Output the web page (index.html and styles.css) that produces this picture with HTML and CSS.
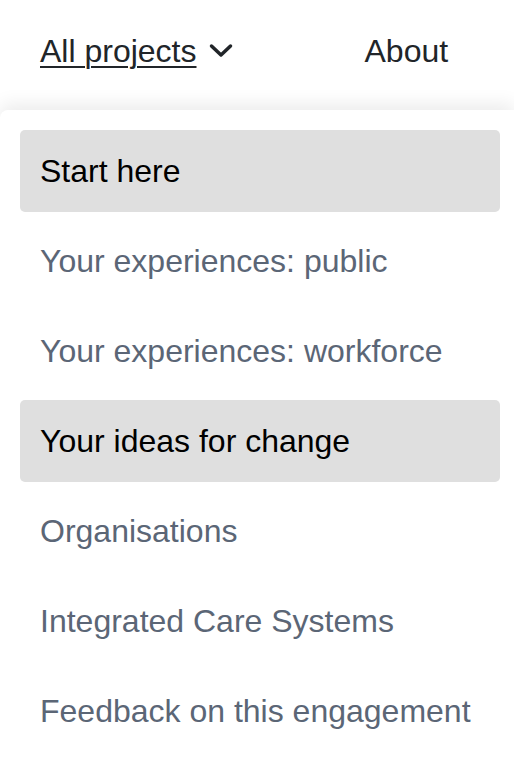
FILE: index.html
```html
<!DOCTYPE html>
<html lang="en">
<head>
<meta charset="utf-8">
<title>All projects</title>
<link rel="stylesheet" href="styles.css">
</head>
<body>
<header class="topbar">
  <a class="nav-link nav-link--current" href="#">All projects</a>
  <svg class="chevron" width="28" height="28" viewBox="0 0 28 28" aria-hidden="true">
    <path d="M4.5 9 L14 18 L23.5 9" fill="none" stroke="#212529" stroke-width="3.5" stroke-linecap="round" stroke-linejoin="round"/>
  </svg>
  <a class="nav-link nav-link--about" href="#">About</a>
</header>
<nav class="menu">
  <a class="menu-item menu-item--active" href="#">Start here</a>
  <a class="menu-item" href="#">Your experiences: public</a>
  <a class="menu-item" href="#">Your experiences: workforce</a>
  <a class="menu-item menu-item--active" href="#">Your ideas for change</a>
  <a class="menu-item" href="#">Organisations</a>
  <a class="menu-item" href="#">Integrated Care Systems</a>
  <a class="menu-item" href="#">Feedback on this engagement</a>
</nav>
</body>
</html>
```
FILE: styles.css
```css
* { box-sizing: border-box; }
html, body {
  margin: 0;
  padding: 0;
  background: #ffffff;
  font-family: "Liberation Sans", Arial, Helvetica, sans-serif;
  overflow: hidden;
}
.topbar {
  display: flex;
  align-items: center;
  height: 110px;
  padding: 0 0 8px 40px;
}
.nav-link {
  font-size: 32px;
  line-height: 36px;
  color: #212529;
  text-decoration: none;
}
.nav-link--current {
  text-decoration: underline;
  text-decoration-thickness: 2px;
  text-underline-offset: 4px;
}
.chevron {
  margin-left: 10px;
  margin-top: 0;
}
.nav-link--about {
  margin-left: 130px;
}
.menu {
  display: flex;
  flex-direction: column;
  gap: 8px;
  padding: 20px 14px 20px 20px;
  background: #ffffff;
  border-radius: 8px 0 0 0;
  box-shadow: 0 -6px 18px rgba(0, 0, 0, 0.08);
}
.menu-item {
  display: flex;
  align-items: center;
  height: 82px;
  padding: 0 20px;
  border-radius: 5px;
  font-size: 32px;
  line-height: 36px;
  color: #5b6676;
  text-decoration: none;
}
.menu-item--active {
  background: #dfdfdf;
  color: #000000;
}
```
